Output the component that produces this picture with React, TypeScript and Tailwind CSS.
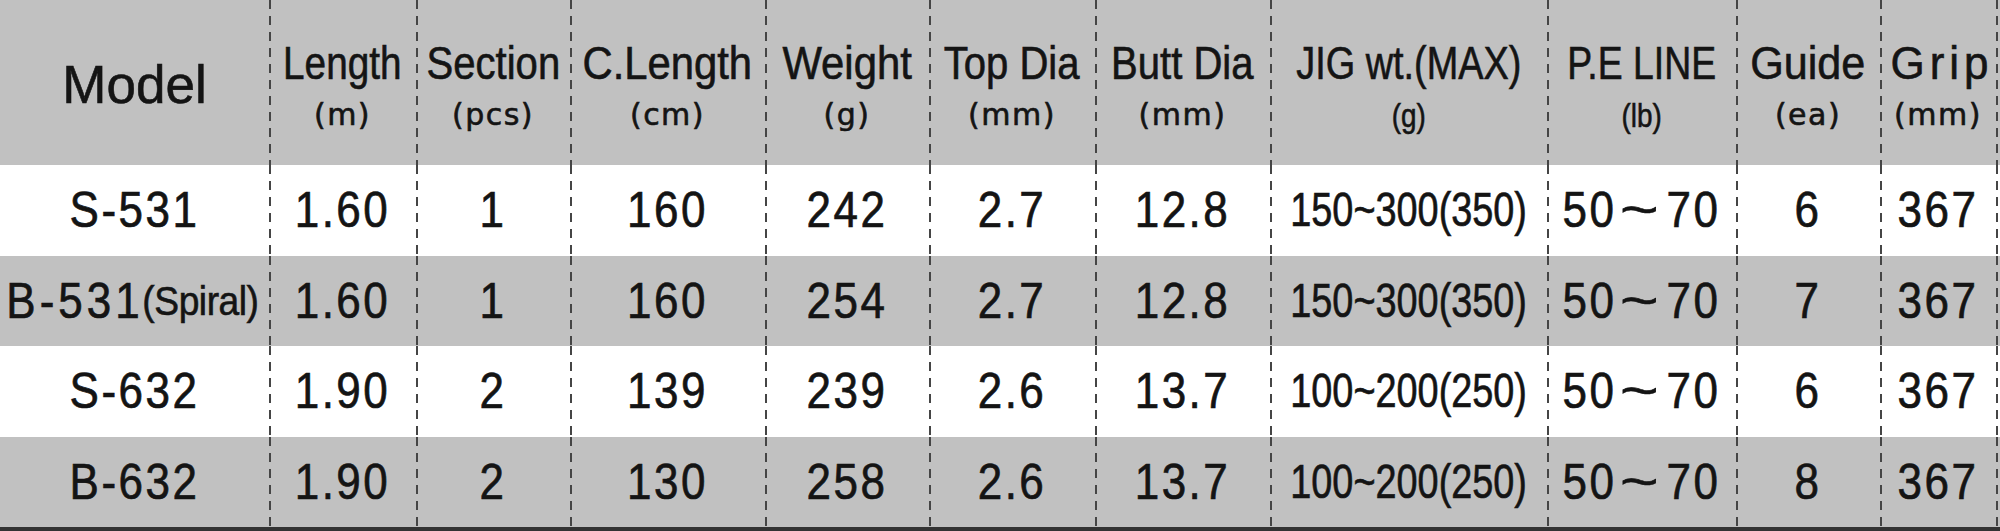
import React from 'react';

type Col = {
  label: string;
  unit?: string;
  width: string;
  labelClass: string;
  unitClass: string;
  cellClass: string;
};

const DIVIDER =
  'bg-[repeating-linear-gradient(to_bottom,#454545_0px,#454545_9px,transparent_9px,transparent_16px)] bg-no-repeat bg-[length:2px_100%]';

const UNIT_ROUND = "font-['DejaVu_Sans',sans-serif] text-[30px] leading-[30px] tracking-[1.5px]";
const UNIT_NARROW = 'inline-block text-[34px] leading-[30px] scale-x-[0.82]';
const CELL = 'inline-block text-[44px] leading-[44px] tracking-[2.5px] scale-y-[1.12]';

const columns: Col[] = [
  { label: 'Model', width: 'w-[269px]', labelClass: 'text-[53px] leading-[53px]', unitClass: '', cellClass: CELL },
  { label: 'Length', unit: '(m)', width: 'w-[147px]', labelClass: 'scale-x-[0.88]', unitClass: UNIT_ROUND, cellClass: CELL },
  { label: 'Section', unit: '(pcs)', width: 'w-[154px]', labelClass: 'scale-x-[0.91]', unitClass: UNIT_ROUND, cellClass: CELL },
  { label: 'C.Length', unit: '(cm)', width: 'w-[195px]', labelClass: 'scale-x-[0.95]', unitClass: UNIT_ROUND, cellClass: CELL },
  { label: 'Weight', unit: '(g)', width: 'w-[164px]', labelClass: 'scale-x-[0.95]', unitClass: UNIT_ROUND, cellClass: CELL },
  { label: 'Top Dia', unit: '(mm)', width: 'w-[166px]', labelClass: 'scale-x-[0.91]', unitClass: UNIT_ROUND, cellClass: CELL },
  { label: 'Butt Dia', unit: '(mm)', width: 'w-[175px]', labelClass: 'scale-x-[0.91]', unitClass: UNIT_ROUND, cellClass: CELL },
  { label: 'JIG wt.(MAX)', unit: '(g)', width: 'w-[277px]', labelClass: 'scale-x-[0.86]', unitClass: UNIT_NARROW, cellClass: 'inline-block text-[44px] leading-[44px] scale-x-[0.86] scale-y-[1.08]' },
  { label: 'P.E LINE', unit: '(lb)', width: 'w-[189px]', labelClass: 'scale-x-[0.85]', unitClass: UNIT_NARROW, cellClass: CELL },
  { label: 'Guide', unit: '(ea)', width: 'w-[144px]', labelClass: 'scale-x-[0.98]', unitClass: UNIT_ROUND, cellClass: CELL },
  { label: 'Grip', unit: '(mm)', width: 'w-[116px]', labelClass: 'tracking-[5px] pl-[8px]', unitClass: UNIT_ROUND, cellClass: CELL },
];

const rows: string[][] = [
  ['S-531', '1.60', '1', '160', '242', '2.7', '12.8', '150~300(350)', '50~70', '6', '367'],
  ['B-531', '1.60', '1', '160', '254', '2.7', '12.8', '150~300(350)', '50~70', '7', '367'],
  ['S-632', '1.90', '2', '139', '239', '2.6', '13.7', '100~200(250)', '50~70', '6', '367'],
  ['B-632', '1.90', '2', '130', '258', '2.6', '13.7', '100~200(250)', '50~70', '8', '367'],
];

function HeaderCell({ col, index }: { col: Col; index: number }) {
  const divider = index > 0 ? DIVIDER : '';
  if (!col.unit) {
    return (
      <div className={`${col.width} shrink-0 flex items-center justify-center pt-[4px] ${divider}`}>
        <span className={col.labelClass}>{col.label}</span>
      </div>
    );
  }
  return (
    <div className={`${col.width} shrink-0 flex flex-col items-center justify-center pt-[6px] ${divider}`}>
      <span className={`inline-block whitespace-nowrap text-[44px] leading-[44px] scale-y-[1.05] ${col.labelClass}`}>{col.label}</span>
      <span className={`mt-[15px] whitespace-nowrap ${col.unitClass}`}>{col.unit}</span>
    </div>
  );
}

function Value({ col, value }: { col: Col; value: string }) {
  // P.E line range uses a wide tilde in the original sheet
  if (value.includes('~') && !value.includes('(')) {
    const [a, b] = value.split('~');
    return (
      <span className={col.cellClass}>
        {a}
        <span className="inline-block scale-x-[1.5] mx-[11px]">~</span>
        {b}
      </span>
    );
  }
  return <span className={col.cellClass}>{value}</span>;
}

function BodyCell({ col, index, value, spiral }: { col: Col; index: number; value: string; spiral: boolean }) {
  const divider = index > 0 ? DIVIDER : '';
  return (
    <div className={`${col.width} shrink-0 flex items-center justify-center whitespace-nowrap ${divider}`}>
      {spiral ? (
        <span className="inline-block text-[44px] leading-[44px] tracking-[4px] scale-y-[1.12]">{value}</span>
      ) : (
        <Value col={col} value={value} />
      )}
      {spiral && (
        <span className="inline-block text-[40px] leading-[44px] tracking-[-0.5px] scale-x-[0.93] -ml-[6px]">(Spiral)</span>
      )}
    </div>
  );
}

export default function App() {
  return (
    <div className="w-[2000px] h-[531px] overflow-hidden bg-white text-[#141414] flex flex-col font-['Liberation_Sans',Arial,sans-serif] [-webkit-text-stroke:0.6px_#141414]">
      <div className="flex h-[165px] shrink-0 bg-[#c1c1c1]">
        {columns.map((col, i) => (
          <HeaderCell key={col.label} col={col} index={i} />
        ))}
        <div className={`flex-1 ${DIVIDER}`} />
      </div>
      {rows.map((row, r) => (
        <div key={r} className={`flex h-[90.5px] shrink-0 ${r % 2 === 0 ? 'bg-white' : 'bg-[#c1c1c1]'}`}>
          {row.map((value, i) => (
            <BodyCell key={i} col={columns[i]} index={i} value={value} spiral={r === 1 && i === 0} />
          ))}
          <div className={`flex-1 ${DIVIDER}`} />
        </div>
      ))}
      <div className="h-[4px] shrink-0 bg-[#333]" />
    </div>
  );
}
